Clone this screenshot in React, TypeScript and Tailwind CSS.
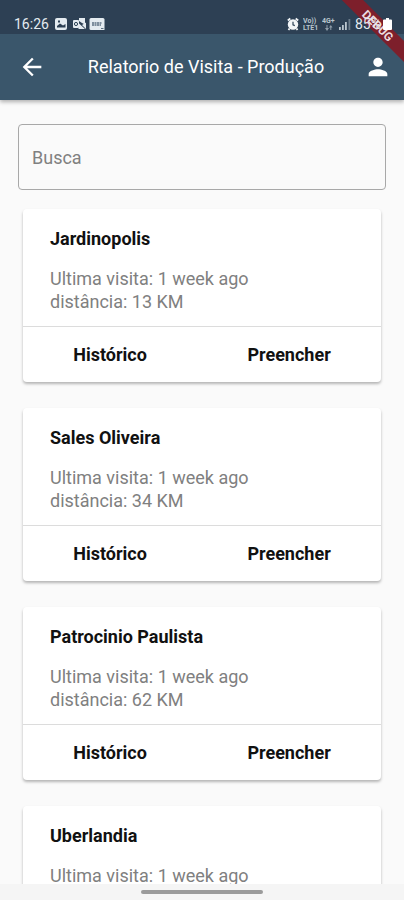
import { MdArrowBack, MdPerson } from 'react-icons/md';

type Visit = { city: string; lastVisit: string; distance: string };

const visits: Visit[] = [
  { city: 'Jardinopolis', lastVisit: '1 week ago', distance: '13 KM' },
  { city: 'Sales Oliveira', lastVisit: '1 week ago', distance: '34 KM' },
  { city: 'Patrocinio Paulista', lastVisit: '1 week ago', distance: '62 KM' },
  { city: 'Uberlandia', lastVisit: '1 week ago', distance: '98 KM' },
];

function NotificationIcons() {
  return (
    <svg width="50" height="14" viewBox="0 0 50 14" fill="#e4ebf0" aria-hidden="true">
      {/* gallery */}
      <path fillRule="evenodd" d="M2 1h8a2 2 0 0 1 2 2v8a2 2 0 0 1-2 2H2a2 2 0 0 1-2-2V3a2 2 0 0 1 2-2Zm0 9.500h8.500V7L8 8.500 5 6.500 2 9Zm1-7v2h2v-2Z" />
      {/* mail */}
      <rect x="18" y="3" width="6" height="8" rx="1" />
      <path d="M24 1h6v6.500l-3-1.500-3-2Z" />
      <path d="M23.500 6 30 12h-6.500ZM31 5.500V12l-4-4Z" />
      <circle cx="21" cy="7" r="1.600" fill="none" stroke="#2d4356" strokeWidth="1" />
      {/* news */}
      <path d="M36 1h12a1.500 1.500 0 0 1 1.500 1.500V13H36a1.500 1.500 0 0 1-1.500-1.500v-9A1.500 1.500 0 0 1 36 1Z" />
      <path d="M37 6h9.500M37 8h9" stroke="#5d7282" strokeWidth="1.500" strokeDasharray="2 .5" />
      <path d="M46 11.500h2.500" stroke="#5d7282" strokeWidth="1" />
    </svg>
  );
}

function AlarmIcon() {
  return (
    <svg width="12" height="14" viewBox="0 0 12 14" aria-hidden="true">
      <circle cx="6" cy="7.500" r="5.200" fill="#f2f5f7" />
      <path d="m.8 3.500 2.500-2M11.200 3.500l-2.500-2M2.500 11.500l-1 1.500M9.500 11.500l1 1.500" stroke="#f2f5f7" strokeWidth="1.800" />
      <path d="M6 4.800v3l1.800.8" fill="none" stroke="#2d4356" strokeWidth="1.200" />
    </svg>
  );
}

function SignalIcons() {
  return (
    <div className="flex items-center gap-1 text-[#b9c5ce]">
      <svg width="15" height="14" viewBox="0 0 15 14" fill="currentColor" fontSize="7" fontWeight="700" aria-hidden="true">
        <text x="0" y="6">Vo))</text>
        <text x="0" y="13">LTE1</text>
      </svg>
      <svg width="13" height="14" viewBox="0 0 13 14" fill="currentColor" fontSize="7" fontWeight="700" aria-hidden="true">
        <text x="0" y="6">4G+</text>
        <path d="M3 11h1.500V8h1v3H7l-2 3ZM7 10.500 8.800 8l1.700 2.500H9.300V13h-1v-2.500Z" opacity=".7" />
      </svg>
      <svg width="12" height="12" viewBox="0 0 12 12" fill="currentColor" aria-hidden="true">
        <path d="M0 9h1.800v3H0ZM3 7h1.800v5H3ZM6 4h1.800v8H6Z" />
        <path d="M9.500 1h1.800v11H9.500Z" opacity=".45" />
      </svg>
    </div>
  );
}

// system icons are drawn over the debug banner
function StatusBar() {
  return (
    <div className="bg-[#2d4054]">
      <div className="relative z-20 flex h-[34px] items-end justify-between pr-3 pb-0.5 pl-3.5 text-sm leading-4 text-[#e4ebf0]">
        <div className="flex items-center gap-1.5">
          <span>16:26</span>
          <NotificationIcons />
        </div>
        <div className="flex items-center gap-1">
          <AlarmIcon />
          <SignalIcons />
          <div className="flex items-center gap-0.5">
            <span>85%</span>
            <svg width="9" height="12" viewBox="0 0 9 12" fill="#ffffff" aria-hidden="true">
              <path d="M3 0h3v1.500h2a1 1 0 0 1 1 1V11a1 1 0 0 1-1 1H1a1 1 0 0 1-1-1V2.500a1 1 0 0 1 1-1h2Z" />
            </svg>
          </div>
        </div>
      </div>
    </div>
  );
}

function DebugBanner() {
  return (
    <div className="pointer-events-none absolute top-0 right-0 z-10 size-16 overflow-hidden">
      <div className="absolute top-[18px] right-[-24px] flex h-[15px] w-[100px] rotate-45 items-center justify-center bg-[#7d1f2b] text-xs font-bold text-[#ecdcdf]">
        DEBUG
      </div>
    </div>
  );
}

function VisitCard({ visit }: { visit: Visit }) {
  return (
    <article className="rounded bg-white shadow-[0_2px_3px_rgba(0,0,0,0.28)]">
      <div className="px-[27px] pt-[18px] pb-[13px]">
        <h2 className="text-lg leading-6 font-bold text-[#111111]">{visit.city}</h2>
        <p className="mt-4 text-lg leading-[23px] text-[#808080]">
          Ultima visita: {visit.lastVisit}
          <br />
          distância: {visit.distance}
        </p>
      </div>
      <div className="flex justify-around border-t border-[#dcdcdc]">
        <button type="button" className="h-[55px] text-lg font-bold text-[#111111]">
          Histórico
        </button>
        <button type="button" className="h-[55px] text-lg font-bold text-[#111111]">
          Preencher
        </button>
      </div>
    </article>
  );
}

export default function App() {
  return (
    <div className="relative flex h-screen flex-col overflow-hidden bg-[#fafafa] font-[Roboto,sans-serif]">
      <header className="relative z-10 shadow-[0_2px_4px_rgba(0,0,0,0.3)]">
        <StatusBar />
        <DebugBanner />
        <div className="flex h-[66px] items-center justify-between bg-[#3a566b] pr-3 pl-4 text-white">
          <button type="button" aria-label="Voltar" className="flex w-8 justify-center">
            <MdArrowBack size={28} />
          </button>
          <h1 className="text-lg">Relatorio de Visita - Produção</h1>
          <button type="button" aria-label="Perfil">
            <MdPerson size={28} />
          </button>
        </div>
      </header>

      <main className="min-h-0 flex-1 overflow-hidden px-[18px] pt-6">
        <input
          type="text"
          aria-label="Busca"
          placeholder="Busca"
          className="h-[66px] w-full rounded border border-[#a8a8a8] bg-transparent px-[13px] text-lg text-[#333333] outline-none placeholder:text-[#808080]"
        />
        <div className="mt-[19px] flex flex-col gap-[26px] px-[5px]">
          {visits.map((visit) => (
            <VisitCard key={visit.city} visit={visit} />
          ))}
        </div>
      </main>

      <footer className="flex h-4 justify-center bg-[#f5f5f5] pt-1.5">
        <div className="h-1 w-[122px] rounded-full bg-[#9b9b9b]" />
      </footer>
    </div>
  );
}
